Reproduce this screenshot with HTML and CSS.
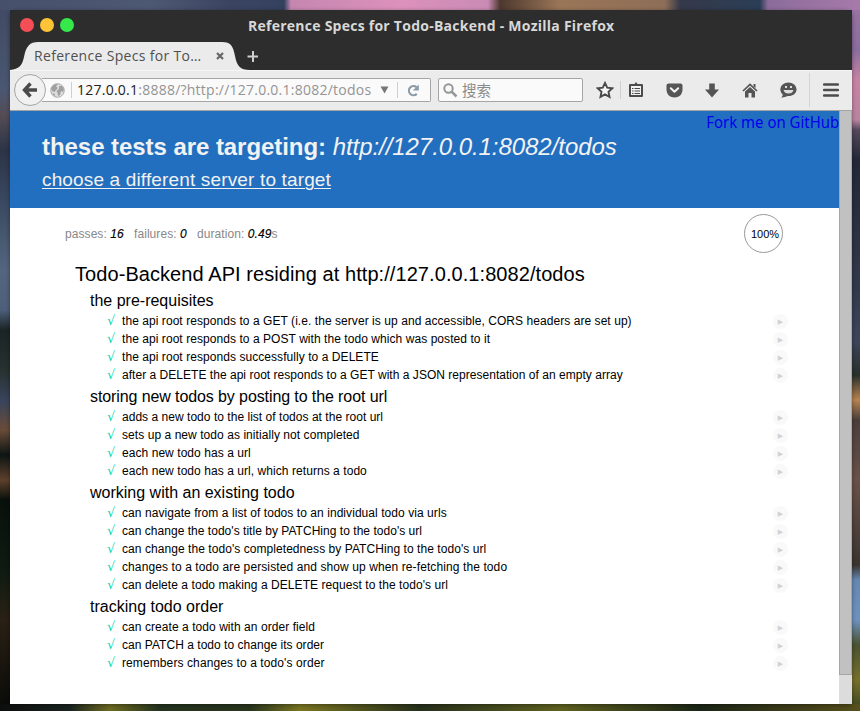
FILE: index.html
```html
<!DOCTYPE html>
<html lang="en">
<head>
<meta charset="utf-8">
<title>Reference Specs for Todo-Backend</title>
<link rel="stylesheet" href="styles.css">
</head>
<body>
<div class="window">
  <div class="titlebar">
    <div class="lights"><i class="red"></i><i class="yellow"></i><i class="green"></i></div>
    <div class="window-title">Reference Specs for Todo-Backend - Mozilla Firefox</div>
  </div>
  <div class="tabs">
    <div class="tab">
      <svg class="tab-shape" width="240" height="28" viewBox="0 0 240 28"><path d="M0 28C9 27 12 24 14 15C16 4 20 0 28 0H212C221 0 223 4 225 14C227 24 230 28 240 28Z" fill="#ebebeb"/></svg>
      <span class="tab-label">Reference Specs for To…</span>
      <svg class="tab-close" width="8" height="8" viewBox="0 0 8 8"><path d="M1 1L7 7M7 1L1 7" stroke="#666" stroke-width="2.2"/></svg>
    </div>
    <svg class="tab-add" width="11" height="11" viewBox="0 0 11 11"><path d="M6 0V11M0.500 5.500H11" stroke="#cfcfcf" stroke-width="2"/></svg>
  </div>
  <div class="toolbar">
    <div class="back"><svg width="16" height="16" viewBox="0 0 16 16"><path d="M8.500 1.500L2.500 8L8.500 14.500M3 8H15" fill="none" stroke="#4a4a4a" stroke-width="3.400"/></svg></div>
    <div class="address">
      <svg class="globe" width="15" height="15" viewBox="0 0 15 15"><circle cx="7.500" cy="7.500" r="6.800" fill="#dedede" stroke="#aaa"/><path d="M1 5L4 1.500L8 1L6 3.500L8 5L6 7L4.500 9L2 8ZM9 3L12 3L14 6.500L13 9L11 8L10 12L8 13L7.500 9.500L6.500 8L9 6ZM2 10L5 11L5 13.500Z" fill="#a0a0a0"/></svg>
      <i class="sep"></i>
      <span class="url"><b>127.0.0.1</b>:8888/?http://127.0.0.1:8082/todos</span>
      <svg class="drop" width="9" height="8" viewBox="0 0 9 8"><path d="M0.500 0.500H8.500L4.500 7.500Z" fill="#777"/></svg>
      <i class="sep sep-reload"></i>
      <svg class="reload" width="13" height="13" viewBox="0 0 13 13"><path d="M9.800 9.900A4.600 4.600 0 1 1 9.600 3.200" fill="none" stroke="#8b9ca9" stroke-width="2.200"/><path d="M11.800 0.500V6.500H5.800Z" fill="#8b9ca9"/></svg>
    </div>
    <div class="search">
      <svg width="15" height="15" viewBox="0 0 15 15"><circle cx="5.500" cy="5.500" r="4.200" fill="none" stroke="#979797" stroke-width="2"/><path d="M8.500 8.500L13.500 13.500" stroke="#979797" stroke-width="2.500"/></svg>
      <span>搜索</span>
    </div>
    <div class="actions">
      <svg class="star" width="18" height="18" viewBox="0 0 18 18"><path d="M9 2L11.200 6.700L16.300 7.300L12.500 10.800L13.500 15.900L9 13.400L4.500 15.900L5.500 10.800L1.700 7.300L6.800 6.700Z" fill="#f6f6f6" stroke="#4a4a4a" stroke-width="1.900"/></svg>
      <i class="sep"></i>
      <svg class="list" width="16" height="16" viewBox="0 0 16 16"><path d="M2 3H14V14H2Z" fill="#f2f2f2" stroke="#4c4c4c" stroke-width="2" stroke-linejoin="round"/><path d="M4.500 4V2H6.500L8 0L9.500 2H11.500V4Z" fill="#4c4c4c"/><path d="M4 6.500H5.500M6.500 6.500H12M4 9H5.500M6.500 9H12M4 11.500H5.500M6.500 11.500H12" stroke="#4c4c4c" stroke-width="1"/></svg>
      <svg class="pocket" width="17" height="15" viewBox="0 0 17 15"><path d="M2.500 0.500H14.500Q16.500 0.500 16.500 2.500V6.500C16.500 11.500 13 14.500 8.500 14.500S.5 11.500 .5 6.500V2.500Q.5 .5 2.500 .5Z" fill="#555"/><path d="M4.800 5.200L8.500 8.700L12.200 5.200" fill="none" stroke="#f2f2f2" stroke-width="2" stroke-linecap="round" stroke-linejoin="round"/></svg>
      <svg class="down" width="14" height="15" viewBox="0 0 14 15"><path d="M4.200 .5H9.800V6.500H14L7 14.500L0 6.500H4.200Z" fill="#555"/></svg>
      <svg class="home" width="16" height="15" viewBox="0 0 16 15"><path d="M1 8L8 1.500L15 8" fill="none" stroke="#555" stroke-width="1.700"/><path d="M3 8.500L8 4L13 8.500V14.500H9.500V10H6.500V14.500H3ZM11.500 1H13.500V5L11.500 3.500Z" fill="#555"/></svg>
      <svg class="chat" width="17" height="16" viewBox="0 0 17 16"><path d="M8.500 .5C13 .5 16.500 3.500 16.500 7.500S13 14 8.500 14C6.500 14 5.500 15.500 1 15.500C2.500 14.500 3 13 2.500 12.300C-2.500 7 2 .5 8.500 .5Z" fill="#555"/><path d="M5 4H7V6H5ZM10 4H12V6H10ZM3.500 8H13.500Q12.500 11.500 8.500 11.500T3.500 8Z" fill="#ddd"/></svg>
      <i class="menu-sep"></i>
      <svg class="menu" width="16" height="14" viewBox="0 0 16 14"><path d="M1 1.500H15M1 7H15M1 12.500H15" stroke="#4c4c4c" stroke-width="2.500" stroke-linecap="round"/></svg>
    </div>
  </div>
  <div class="viewport">
    <main>
      <header>
        <a class="fork">Fork me on GitHub</a>
        <h1><span class="lead">these tests are targeting:</span> <em>http://127.0.0.1:8082/todos</em></h1>
        <a class="choose">choose a different server to target</a>
      </header>
      <div class="stats">
        <span class="passes">passes: <em>16</em></span>
        <span class="failures">failures: <em>0</em></span>
        <span class="duration">duration: <em>0.49</em>s</span>
        <div class="progress">100%</div>
      </div>
      <section class="report">
        <h2>Todo-Backend API residing at http://127.0.0.1:8082/todos</h2>
        <h3>the pre-requisites</h3>
        <ul>
          <li><span>the api root responds to a GET (i.e. the server is up and accessible, CORS headers are set up)</span></li>
          <li><span>the api root responds to a POST with the todo which was posted to it</span></li>
          <li><span>the api root responds successfully to a DELETE</span></li>
          <li><span class="narrow">after a DELETE the api root responds to a GET with a JSON representation of an empty array</span></li>
        </ul>
        <h3 class="tight">storing new todos by posting to the root url</h3>
        <ul>
          <li><span class="narrow">adds a new todo to the list of todos at the root url</span></li>
          <li><span>sets up a new todo as initially not completed</span></li>
          <li><span>each new todo has a url</span></li>
          <li><span>each new todo has a url, which returns a todo</span></li>
        </ul>
        <h3>working with an existing todo</h3>
        <ul>
          <li><span>can navigate from a list of todos to an individual todo via urls</span></li>
          <li><span class="narrow">can change the todo's title by PATCHing to the todo's url</span></li>
          <li><span>can change the todo's completedness by PATCHing to the todo's url</span></li>
          <li><span class="wide">changes to a todo are persisted and show up when re-fetching the todo</span></li>
          <li><span>can delete a todo making a DELETE request to the todo's url</span></li>
        </ul>
        <h3>tracking todo order</h3>
        <ul>
          <li><span>can create a todo with an order field</span></li>
          <li><span class="narrow">can PATCH a todo to change its order</span></li>
          <li><span class="wide">remembers changes to a todo's order</span></li>
        </ul>
      </section>
    </main>
    <div class="scrollbar"><div class="thumb"></div></div>
  </div>
</div>
</body>
</html>
```
FILE: styles.css
```css
* { box-sizing: border-box; }
body {
  margin: 0;
  width: 860px;
  height: 711px;
  padding: 10px 8px 7px 10px;
  overflow: hidden;
  font-family: "Liberation Sans", sans-serif;
  background:
    linear-gradient(90deg, #46506a 0, #4d5872 150px, #3b4562 230px, #33415f 284px, #c586b0 291px, #dc91bb 400px, #c98bb5 488px, #4d382f 500px, #9a7657 560px, #8d6e58 665px, #35394a 680px, #2b3e55 760px, #8b6c9b 768px, #a77aaa 860px) 0 0 / 860px 10px no-repeat,
    linear-gradient(90deg, #0b0e0c 0, #1b2420 70px, #6d6b22 110px, #24321e 160px, #29351e 250px, #7a7522 300px, #26301b 420px, #5e6120 560px, #1b2516 700px, #574f1c 860px) 0 704px / 860px 7px no-repeat,
    linear-gradient(180deg, #3f4963 0, #4b5772 90px, #544c55 115px, #2c3447 150px, #394860 200px, #53657f 270px, #4d5f7a 310px, #1b2425 330px, #27312f 370px, #38445c 400px, #694b38 430px, #0d1513 455px, #5d402b 480px, #08100c 500px, #0f1b12 570px, #2a2014 620px, #080a08 711px) 0 0 / 10px 711px no-repeat,
    linear-gradient(180deg, #9b74a4 0, #8c6d9f 50px, #c884a4 80px, #b9839f 120px, #54485e 130px, #232838 160px, #313a4c 290px, #3d455d 340px, #28312a 375px, #b88350 400px, #4a3e3a 420px, #6a5149 480px, #493e37 540px, #3b332f 565px, #6588b3 580px, #6e92bf 620px, #4a5230 645px, #76702b 680px, #39421c 711px) 852px 0 / 8px 711px no-repeat,
    #27313a;
}
i { font-style: normal; }
svg { display: block; flex: none; }
.window {
  width: 842px;
  height: 694px;
  display: flex;
  flex-direction: column;
  border-radius: 6px 6px 0 0;
  overflow: hidden;
  background: #2d2d2d;
  box-shadow: 0 1px 4px rgba(0, 0, 0, .4);
}
.titlebar { height: 32px; display: flex; align-items: center; flex: none; }
.lights { display: flex; gap: 6px; padding-left: 10px; width: 238px; margin-top: -2px; }
.lights i { width: 14px; height: 14px; border-radius: 50%; }
.red { background: #f44f56; }
.yellow { background: #fcc436; }
.green { background: #35e94b; }
.window-title {
  font: bold 14px/18px "Open Sans", sans-serif;
  letter-spacing: .25px;
  color: #d8d8d8;
  white-space: nowrap;
}
.tabs { height: 28px; display: flex; align-items: center; flex: none; }
.tab { position: relative; width: 237px; height: 28px; display: flex; align-items: center; padding-left: 24px; }
.tab-shape { position: absolute; left: 0; top: 0; }
.tab-label { position: relative; width: 182px; font: 14px/20px "Open Sans", sans-serif; letter-spacing: .32px; color: #505050; white-space: nowrap; }
.tab-close { position: relative; }
.toolbar {
  height: 41px;
  flex: none;
  display: flex;
  align-items: center;
  background: #ebebeb;
  border-top: 1px solid #f5f5f5;
  border-bottom: 1px solid #a3a3a3;
  padding-left: 4px;
}
.back {
  position: relative;
  width: 32px;
  height: 32px;
  margin-top: -1px;
  border: 1px solid #a5a5a5;
  border-radius: 50%;
  background: #f1f1f1;
  display: flex;
  align-items: center;
  justify-content: center;
  flex: none;
}
.address, .search { margin-top: -1px; }
.address {
  width: 389px;
  height: 24px;
  margin-left: -4px;
  border: 1px solid #a5a5a5;
  border-left: 0;
  border-radius: 0 2px 2px 0;
  background: #fafafa;
  display: flex;
  align-items: center;
  flex: none;
}
.globe { margin-left: 8px; }
.sep { width: 1px; height: 16px; background: #cfcfcf; flex: none; }
.address .sep { margin-left: 6px; }
.url { width: 308px; padding-left: 5px; font: 14px/20px "Open Sans", sans-serif; letter-spacing: .24px; color: #949494; white-space: nowrap; }
.url b { font-weight: normal; color: #222; }
.address .sep-reload { margin-left: 8px; }
.reload { margin-left: 9px; }
.search {
  width: 145px;
  height: 24px;
  margin-left: 7px;
  padding-left: 4px;
  gap: 4px;
  border: 1px solid #a5a5a5;
  border-radius: 2px;
  background: #fafafa;
  display: flex;
  align-items: center;
  flex: none;
  font: 14.500px/20px "Noto Sans CJK SC", sans-serif;
  color: #8a8a8a;
}
.search span { margin-top: -1px; }
.actions { display: flex; align-items: center; height: 40px; padding-left: 13px; margin-top: -1px; }
.actions .sep { margin-left: 6px; height: 18px; }
.list { margin-left: 7px; }
.pocket { margin-left: 22px; }
.down { margin-left: 22px; }
.home { margin-left: 23px; }
.chat { margin-left: 22px; }
.menu-sep { width: 1px; height: 34px; background: #d4d4d4; margin: 0 13px 0 12px; }
.viewport { flex: 1; min-height: 0; display: flex; background: #fff; }
main { width: 829px; }
header { position: relative; height: 97px; padding: 21px 0 0 32px; background: #236fbf; color: #f2f2f2; }
.fork { position: absolute; right: 0; top: 0; font: 16px/22px "Noto Sans", sans-serif; transform: scaleX(.935); transform-origin: right; color: #0000ee; white-space: nowrap; }
h1, h2, h3, ul { margin: 0; padding: 0; font-weight: normal; }
h1 { font-size: 24px; line-height: 30px; letter-spacing: -.055px; white-space: nowrap; }
.lead { font-weight: bold; }
.choose { display: inline-block; font-size: 19px; line-height: 24px; letter-spacing: .15px; margin-top: 6px; text-decoration: underline; text-underline-offset: 2px; text-decoration-thickness: 1px; white-space: nowrap; }
.stats { height: 52px; display: flex; align-items: center; padding-left: 55px; font-size: 12px; letter-spacing: .07px; color: #888; white-space: nowrap; }
.stats em { color: #000; -webkit-text-stroke: .15px #000; }
.passes { width: 69px; }
.failures { width: 63px; }
.duration { width: 492px; }
.progress {
  width: 39px;
  height: 39px;
  margin-left: auto;
  margin-right: 56px;
  margin-top: -2px;
  border: 1px solid #999;
  border-radius: 50%;
  font-size: 11px;
  line-height: 38px;
  letter-spacing: 0;
  text-align: center;
  padding-left: 3px;
  color: #000;
}
.report { color: #000; white-space: nowrap; }
h2 { font-size: 20px; line-height: 28px; letter-spacing: .07px; padding-left: 65px; }
h3 { font-size: 16px; line-height: 24px; height: 24px; padding: 1px 0 0 80px; }
.tight { letter-spacing: -.1px; }
li { height: 18px; display: flex; align-items: center; padding: 0 51px 0 97px; font-size: 12px; line-height: 18px; letter-spacing: .06px; list-style: none; }
.narrow { letter-spacing: .03px; }
.wide { letter-spacing: .1px; }
li::before { content: "√"; width: 15px; font: 13px/18px "DejaVu Sans", sans-serif; color: #00d6b2; }
li::after {
  content: "▶";
  width: 15px;
  height: 15px;
  margin-left: auto;
  border-radius: 50%;
  background: #f9f9f9;
  color: #d2d2d2;
  font: 7px/16px "DejaVu Sans", sans-serif;
  text-align: center;
}
.scrollbar { width: 13px; background: #dcdcdc; }
.thumb { height: 564px; background: #c1c1c1; border: 1px solid #a6a6a6; border-top: 0; }
```
